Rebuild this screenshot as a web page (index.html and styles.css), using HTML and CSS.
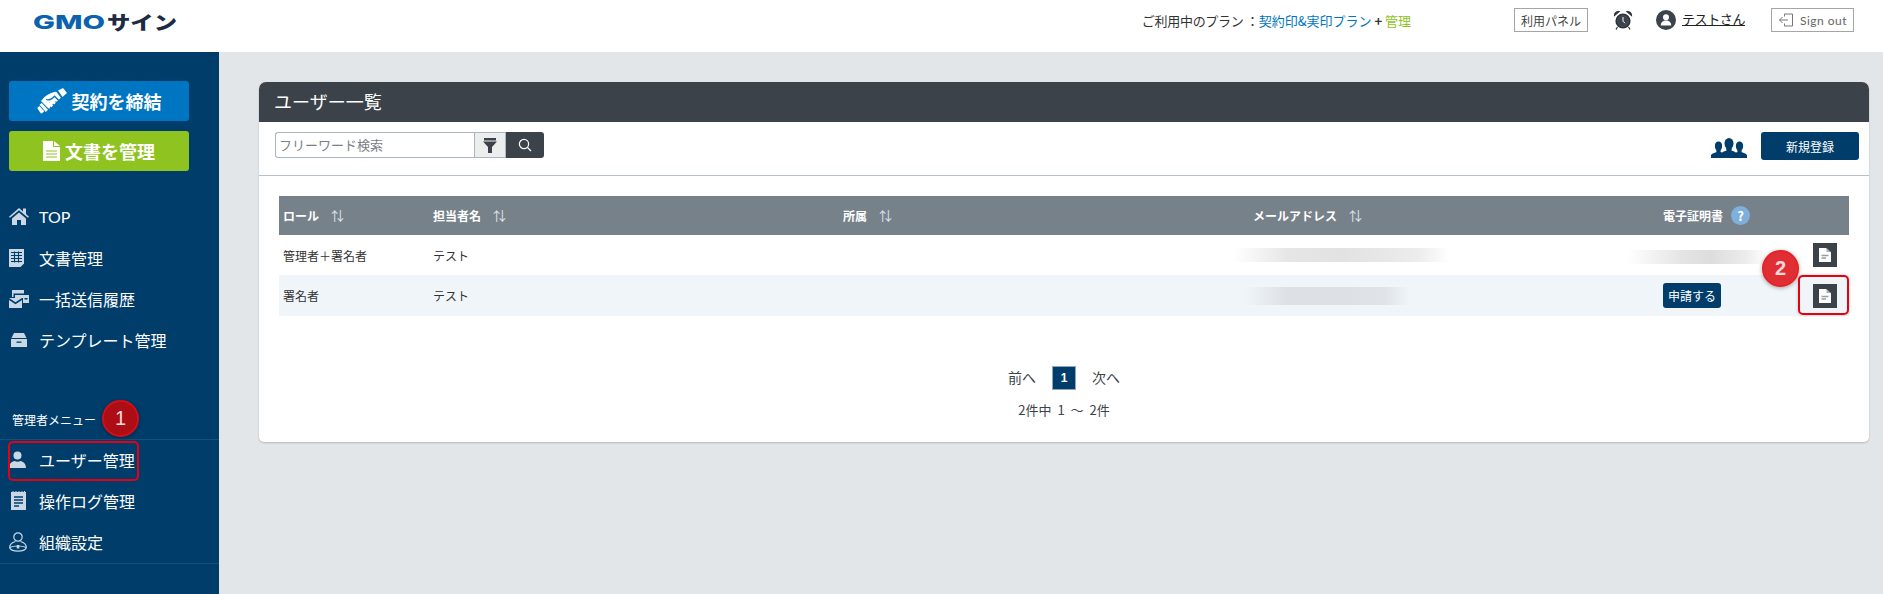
FILE: index.html
```html
<!DOCTYPE html>
<html lang="ja">
<head>
<meta charset="utf-8">
<title>ユーザー一覧</title>
<link rel="stylesheet" href="styles.css">
</head>
<body>
<header class="topbar">
  <svg class="logo" width="146" height="20" viewBox="0 0 146 20">
    <text class="logo-gmo" x="1" y="15" textLength="72" lengthAdjust="spacingAndGlyphs">GMO</text>
    <text class="logo-sign" x="75" y="15.500" textLength="70" lengthAdjust="spacingAndGlyphs">サイン</text>
  </svg>
  <div class="plan">ご利用中のプラン ：<span class="plan-blue">契約印&amp;実印プラン</span><span class="plan-plus">+</span><span class="plan-green">管理</span></div>
  <a class="top-btn panel-btn">利用パネル</a>
  <svg class="alarm" width="20" height="20" viewBox="0 0 20 20">
    <circle cx="10" cy="11" r="7.600" fill="#2f343a"/>
    <circle cx="10" cy="11" r="5.400" fill="#3c4249" stroke="#5b6269" stroke-width=".5"/>
    <path d="M10 7v4.200l2 2" stroke="#fff" stroke-width="1" fill="none"/>
    <path d="M1.500 5.500C1.500 3 3.500 1.300 6 1.600ZM18.500 5.500C18.500 3 16.500 1.300 14 1.600ZM4.500 17l-1.500 2.300M15.500 17l1.500 2.300" fill="#2f343a" stroke="#2f343a" stroke-width="1.200"/>
  </svg>
  <svg class="user-ico" width="20" height="20" viewBox="0 0 20 20">
    <circle cx="10" cy="10" r="10" fill="#3c4249"/>
    <circle cx="10" cy="7.200" r="3" fill="#fff"/>
    <path d="M4.800 15.500c0-3.500 2.200-5 5.200-5s5.200 1.500 5.200 5z" fill="#fff"/>
  </svg>
  <a class="user-name">テストさん</a>
  <a class="top-btn signout-btn">
    <svg width="16" height="14" viewBox="0 0 16 14" fill="none" stroke="#777" stroke-width="1">
      <path d="M6.500 3.500V1h8v12h-8v-2.500M10 7H1.500M4.500 4 1.500 7l3 3"/>
    </svg>
    <span>Sign out</span>
  </a>
</header>

<div class="shell">
  <aside class="sidebar">
    <a class="cta cta-blue">
      <svg width="30" height="26" viewBox="0 0 30 26">
        <path d="M21 2.500 26 0l4 5-4.500 4z" fill="#fff"/>
        <path d="M7.500 9C11 6 15 4.200 19.300 3.700L23.800 9.800 14 19.800c-1 1-2.300 1-3 .2L5.500 14.500 4 13z" fill="#fff"/>
        <path d="M9 11.500c3.300 1.200 6.200-.3 8.600-3.300l6 6.300M15.500 21.500l-2.500-2.500M18.300 18.700l-2.500-2.500M21 16l-2.500-2.500" fill="none" stroke="#0075c2" stroke-width="1.300"/>
        <path d="M2.500 16.800 4.700 15l6.300 6.700-2.200 2.300z" fill="#fff"/>
        <path d="M.3 20 2.300 18l5 5.300-1.800 1.800c-1 .6-1.800.2-2.300-.6L1.500 22z" fill="#fff"/>
      </svg>
      <span>契約を締結</span>
    </a>
    <a class="cta cta-green">
      <svg width="17" height="20" viewBox="0 0 17 20">
        <path d="M0 0h10v6h7v14H0z" fill="#fff"/>
        <path d="M11 0l6 5h-6z" fill="#fff"/>
        <path d="M3 10h11M3 13h11M3 16h11" stroke="#b5d86c" stroke-width="1.300"/>
      </svg>
      <span>文書を管理</span>
    </a>

    <nav class="nav nav-main">
      <a class="nav-item">
        <span class="nav-ico"><svg width="20" height="17" viewBox="0 0 20 17" fill="#c9d8e4"><path d="M10 0 0 8.800l1 1L10 2.200 19 9.800l1-1-3-2.700V.5h-3v3z"/><path d="M3 10.500 10 4.500l7 6V17h-5v-5H8v5H3z"/></svg></span>
        <span class="latin">TOP</span>
      </a>
      <a class="nav-item">
        <span class="nav-ico"><svg width="16" height="18" viewBox="0 0 16 18"><path d="M0 0h15v14.500L11.500 18H0z" fill="#c9d8e4"/><path d="M2 3.500h11M2 6.500h11M2 9.500h11M2 12.500h11M5.500 2.500v11M9.500 2.500v11" stroke="#003d6b" stroke-width="1.100"/></svg></span>
        <span>文書管理</span>
      </a>
      <a class="nav-item">
        <span class="nav-ico"><svg width="20" height="18" viewBox="0 0 20 18" fill="#c9d8e4"><path d="M3 0h12v3.500H4.500V7H3z"/><path d="M6 5h14v8h-6V8H6z"/><path d="M15.500 8h3v1.500h-3z" fill="#003d6b"/><path d="M0 8h13L6.500 12.300z"/><path d="M0 10l6.500 4.200L13 10v8H0z"/></svg></span>
        <span>一括送信履歴</span>
      </a>
      <a class="nav-item">
        <span class="nav-ico ico-in"><svg width="16" height="14" viewBox="0 0 16 14" fill="#c9d8e4"><path d="M3 0h10l2.500 5h-15z"/><path d="M0 6h16v8H0z"/><path d="M5.500 8.500h5v1.300h-5z" fill="#003d6b"/></svg></span>
        <span>テンプレート管理</span>
      </a>
    </nav>

    <div class="admin-head">
      <span>管理者メニュー</span>
      <span class="badge badge-one">1</span>
    </div>
    <nav class="nav nav-admin">
      <a class="nav-item nav-marked">
        <span class="nav-ico"><svg width="17" height="17" viewBox="0 0 17 17" fill="#c9d8e4"><circle cx="8.500" cy="4.500" r="4"/><path d="M0 17c0-4.500 3-6.500 5.500-7 1.800 1 4.200 1 6 0 2.500.5 5.500 2.500 5.500 7z"/></svg></span>
        <span>ユーザー管理</span>
      </a>
      <a class="nav-item">
        <span class="nav-ico ico-in"><svg width="15" height="19" viewBox="0 0 15 19"><path d="M0 1h15v18H0z" fill="#c9d8e4"/><path d="M2 0v2M5 0v2M8 0v2M11 0v2M13.500 0v2" stroke="#c9d8e4"/><path d="M3 6h9M3 9h9M3 12h9M3 15h5" stroke="#003d6b" stroke-width="1.300"/></svg></span>
        <span>操作ログ管理</span>
      </a>
      <a class="nav-item">
        <span class="nav-ico"><svg width="18" height="20" viewBox="0 0 18 20" fill="none" stroke="#c9d8e4" stroke-width="1.200"><circle cx="9" cy="5" r="4.200"/><path d="M6.500 9.500C3 10.500.7 12.500.7 15.500c0 2 3.500 3.700 8.300 3.700s8.300-1.700 8.300-3.700c0-3-2.300-5-5.800-6"/><path d="M.7 15.500c4-2 12.600-2 16.600 0"/><path d="M9 13v3.500" stroke-width="2.500"/></svg></span>
        <span>組織設定</span>
      </a>
    </nav>
  </aside>

  <main class="main">
    <section class="card">
      <h1 class="card-title">ユーザー一覧</h1>
      <div class="toolbar">
        <div class="search">
          <input class="search-input" type="text" placeholder="フリーワード検索">
          <button class="search-filter">
            <svg width="14" height="15" viewBox="0 0 14 15" fill="#3c4249"><path d="M1 0h12v2.500H1zM0 3.500h14L9 9v6H5V9z"/></svg>
          </button>
          <button class="search-go">
            <svg width="14" height="14" viewBox="0 0 14 14" fill="none" stroke="#fff" stroke-width="1.200"><circle cx="6" cy="6" r="4.600"/><path d="M9.500 9.500 13 13"/></svg>
          </button>
        </div>
        <svg class="people" width="36" height="20" viewBox="0 0 36 20" fill="#003d6b">
          <ellipse cx="7.500" cy="8" rx="3.600" ry="4.500"/><path d="M0 20v-2.500c0-1.500 3-2.500 5.500-3.500l-.3-2h4.600l-.3 2c1 .4 1.800.8 2.500 1.300L9 20z"/>
          <ellipse cx="28.500" cy="8" rx="3.600" ry="4.500"/><path d="M36 20v-2.500c0-1.500-3-2.500-5.500-3.500l.3-2h-4.600l.3 2c-1 .4-1.800.8-2.500 1.300L27 20z"/>
          <ellipse cx="18" cy="5.500" rx="4.500" ry="5.500"/><path d="M9 20v-3c0-2 4-3.500 6.500-4.500l-.5-3h6l-.5 3c2.500 1 6.500 2.500 6.500 4.500v3z"/>
        </svg>
        <button class="new-btn">新規登録</button>
      </div>

      <div class="table-wrap">
        <table class="users">
          <colgroup>
            <col class="col-role"><col class="col-name"><col class="col-dept"><col class="col-mail"><col class="col-cert">
          </colgroup>
          <thead>
            <tr>
              <th>ロール<span class="sort">⇅</span></th>
              <th>担当者名<span class="sort">⇅</span></th>
              <th>所属<span class="sort">⇅</span></th>
              <th>メールアドレス<span class="sort">⇅</span></th>
              <th>電子証明書<span class="help">?</span></th>
            </tr>
          </thead>
          <tbody>
            <tr class="row-one">
              <td>管理者＋署名者</td>
              <td>テスト</td>
              <td></td>
              <td><div class="blur blur-mail-a"></div></td>
              <td class="cert-cell">
                <div class="blur blur-cert"></div>
                <span class="doc-btn"><svg width="12" height="14" viewBox="0 0 12 14"><path d="M0 0h7l5 4.500V14H0z" fill="#fff"/><path d="M7.500 0 12 4H7.500z" fill="#a9adb2"/><path d="M2.500 7.500h7M2.500 10h4.500" stroke="#9a9ea3" stroke-width="1.300"/></svg></span>
              </td>
            </tr>
            <tr class="row-two">
              <td>署名者</td>
              <td>テスト</td>
              <td></td>
              <td><div class="blur blur-mail-b"></div></td>
              <td class="cert-cell">
                <button class="apply-btn">申請する</button>
                <span class="doc-btn"><svg width="12" height="14" viewBox="0 0 12 14"><path d="M0 0h7l5 4.500V14H0z" fill="#fff"/><path d="M7.500 0 12 4H7.500z" fill="#a9adb2"/><path d="M2.500 7.500h7M2.500 10h4.500" stroke="#9a9ea3" stroke-width="1.300"/></svg></span>
                <span class="cert-mark"></span>
                <span class="badge badge-two">2</span>
              </td>
            </tr>
          </tbody>
        </table>
      </div>

      <div class="pager">
        <a class="pager-link">前へ</a>
        <span class="page-current">1</span>
        <a class="pager-link">次へ</a>
      </div>
      <p class="page-info">2件中 1 ～ 2件</p>
    </section>
  </main>
</div>
</body>
</html>
```
FILE: styles.css
```css
*, *::before, *::after { box-sizing: border-box; }
html, body { height: 100%; }
body {
  margin: 0;
  display: flex;
  flex-direction: column;
  height: 594px;
  overflow: hidden;
  background: #e2e6e9;
  color: #3c4249;
  font-family: "Noto Sans CJK JP", "Noto Sans", sans-serif;
  font-size: 12px;
}
a { color: inherit; }
button { font-family: inherit; border: 0; padding: 0; }

/* header */
.topbar {
  flex: 0 0 52px;
  height: 52px;
  background: #fff;
  display: flex;
  align-items: center;
  padding: 0 29px 12px 32px;
}
.logo { margin-top: 8px; overflow: visible; }
.logo-gmo { font-family: "Inter", sans-serif; font-weight: 800; font-size: 19px; fill: #0b62ad; }
.logo-sign { font-family: "Noto Sans CJK JP", sans-serif; font-weight: 900; font-size: 19px; fill: #1e2b45; }
.plan { margin-left: auto; font-size: 13px; color: #333; letter-spacing: -.3px; }
.plan-blue { color: #0075c2; letter-spacing: 0; }
.plan-plus { margin: 0 3px; font-weight: 700; }
.plan-green { color: #8fc31f; letter-spacing: 0; }
.top-btn {
  height: 24px;
  border: 1px solid #a5a5a5;
  display: flex;
  align-items: center;
  justify-content: center;
  color: #444;
}
.panel-btn { width: 74px; margin-left: 103px; }
.alarm { margin-left: 25px; }
.user-ico { margin-left: 23px; }
.user-name { margin-left: 6px; width: 63px; font-size: 13px; letter-spacing: -.4px; white-space: nowrap; color: #222; text-decoration: underline; padding-bottom: 3px; }
.signout-btn { width: 83px; margin-left: 26px; gap: 6px; font-family: "Lato", sans-serif; font-weight: 400; font-size: 12px; letter-spacing: .5px; color: #666; }

/* shell */
.shell { flex: 1; display: flex; min-height: 0; }
.sidebar {
  flex: 0 0 219px;
  background: #003d6b;
  padding-top: 29px;
  color: #fff;
}
.cta {
  width: 180px;
  height: 40px;
  margin: 0 0 10px 9px;
  border-radius: 3px;
  display: flex;
  align-items: center;
  justify-content: center;
  gap: 5px;
  font-size: 18px;
  font-weight: 700;
  color: #fff;
  padding-bottom: 1px;
}
.cta-blue { background: #0075c2; }
.cta-green { background: #8fc31f; }

.nav-main { margin-top: 26px; }
.nav-item {
  height: 41px;
  display: flex;
  align-items: center;
  padding: 0 0 2px 9px;
  font-size: 16px;
  color: #fff;
}
.nav-ico { flex: 0 0 30px; display: flex; align-items: center; }
.ico-in { padding-left: 2px; }
.latin { font-family: "Lato", sans-serif; }

.admin-head {
  height: 78px;
  display: flex;
  align-items: flex-end;
  gap: 6px;
  padding: 0 0 11px 12px;
  font-size: 12px;
  position: relative;
}
.nav-admin {
  border-top: 1px solid #13507d;
  border-bottom: 1px solid #13507d;
}
.nav-marked { position: relative; }
.nav-marked::after {
  content: "";
  position: absolute;
  left: 8px;
  top: 1px;
  width: 131px;
  height: 40px;
  border: 2px solid #e60012;
  border-radius: 5px;
}
.badge {
  position: absolute;
  width: 37px;
  height: 37px;
  border-radius: 50%;
  display: flex;
  align-items: center;
  justify-content: center;
  color: #f4d9da;
  font-family: "Liberation Sans", sans-serif;
  font-size: 20px;
  font-weight: 700;
  box-shadow: 0 1px 4px rgba(0, 0, 0, .35);
}
.badge-one { left: 102px; bottom: 2px; background: #ad0d14; border: 2px solid #d30f18; font-weight: 400; }
.badge-two { left: 103px; top: -25px; background: #df2f35; border: 2px solid #ea2027; }

/* main */
.main { flex: 1; padding: 30px 14px 0 40px; min-width: 0; }
.card {
  background: #fff;
  height: 360px;
  border-radius: 7px 7px 5px 5px;
  box-shadow: 0 1px 2px rgba(0, 0, 0, .2);
  overflow: hidden;
}
.card-title {
  margin: 0;
  height: 40px;
  padding-left: 15px;
  background: #3c4249;
  color: #fff;
  font-size: 18px;
  font-weight: 400;
  line-height: 38px;
}
.toolbar {
  height: 54px;
  display: flex;
  align-items: flex-start;
  padding: 10px 10px 0 16px;
  border-bottom: 1px solid #b5c0ca;
}
.search { display: flex; height: 26px; }
.search-input {
  width: 199px;
  height: 26px;
  border: 1px solid #aab7c3;
  border-right: 0;
  border-radius: 3px 0 0 3px;
  padding: 0 3px 2px;
  font: 13px "Noto Sans CJK JP", sans-serif;
  outline: 0;
}
.search-input::placeholder { color: #7a7f85; opacity: 1; }
.search-filter {
  width: 32px;
  background: #eceded;
  border: 1px solid #aab7c3;
  display: flex;
  align-items: center;
  justify-content: center;
}
.search-go {
  width: 38px;
  background: #3c4249;
  border-radius: 0 3px 3px 0;
  display: flex;
  align-items: center;
  justify-content: center;
}
.people { margin: 6px 14px 0 auto; }
.new-btn {
  width: 98px;
  height: 28px;
  background: #003d6b;
  color: #fff;
  border-radius: 3px;
  font-size: 12px;
}

/* table */
.table-wrap { padding: 20px 20px 0; }
.users { width: 100%; table-layout: fixed; border-collapse: collapse; font-size: 12px; }
.col-role { width: 150px; }
.col-name, .col-dept, .col-mail { width: 410px; }
.col-cert { width: 190px; }
.users th {
  height: 39px;
  background: #76818a;
  color: #fff;
  font-weight: 700;
  text-align: left;
  padding: 0 4px;
}
.users td { padding: 0 4px; color: #333; position: relative; }
.row-one { height: 40px; }
.row-two { height: 41px; background: #f0f5f9; }
.sort { margin-left: 12px; font-weight: 400; font-size: 13px; color: #dfe5ea; }
.help {
  display: inline-flex;
  align-items: center;
  justify-content: center;
  width: 19px;
  height: 19px;
  margin: -4px 0 -4px 8px;
  border-radius: 50%;
  background: #7fb0dc;
  color: #fff;
  font-size: 13px;
}
.blur { height: 14px; }
.blur-mail-a {
  width: 217px;
  margin-left: -20px;
  background: linear-gradient(90deg, rgba(222,222,222,0), #e6e6e6 25%, #e2e2e2 50%, #ececec 85%, rgba(236,236,236,0));
}
.blur-mail-b {
  width: 165px;
  height: 18px;
  margin-left: -8px;
  background: linear-gradient(90deg, rgba(220,224,228,0), #dde1e5 25%, #dde1e5 60%, #e0e4e8 85%, rgba(224,228,232,0));
}
.blur-cert {
  position: absolute;
  left: -32px;
  top: 15px;
  width: 140px;
  background: linear-gradient(90deg, rgba(220,220,220,0), #e4e4e4 40%, #dddddd 60%, #ececec 85%, rgba(236,236,236,0));
}
.cert-cell { height: 40px; }
.doc-btn {
  position: absolute;
  right: 12px;
  top: 8px;
  width: 24px;
  height: 24px;
  background: #3c4249;
  display: flex;
  align-items: center;
  justify-content: center;
}
.row-two .doc-btn { top: 9px; }
.apply-btn {
  width: 58px;
  height: 25px;
  background: #003d6b;
  color: #fff;
  border-radius: 3px;
  font-size: 12px;
  display: block;
}
.cert-mark {
  position: absolute;
  right: 0;
  top: 0;
  width: 51px;
  height: 40px;
  border: 2px solid #e60012;
  border-radius: 5px;
  box-shadow: 0 0 3px rgba(0, 0, 0, .25);
}

/* pager */
.pager {
  display: flex;
  justify-content: center;
  align-items: center;
  gap: 16px;
  margin-top: 50px;
  font-size: 14px;
  color: #3c4249;
}
.pager-link { padding-bottom: 3px; }
.page-current {
  width: 24px;
  height: 24px;
  background: #003d6b;
  border: 1px solid #8ea7bd;
  color: #fff;
  display: flex;
  align-items: center;
  justify-content: center;
  font-size: 12px;
  font-family: "Liberation Sans", sans-serif;
  font-weight: 700;
}
.page-info { margin: 10px 0 0; text-align: center; font-size: 13px; word-spacing: 3px; }
```
